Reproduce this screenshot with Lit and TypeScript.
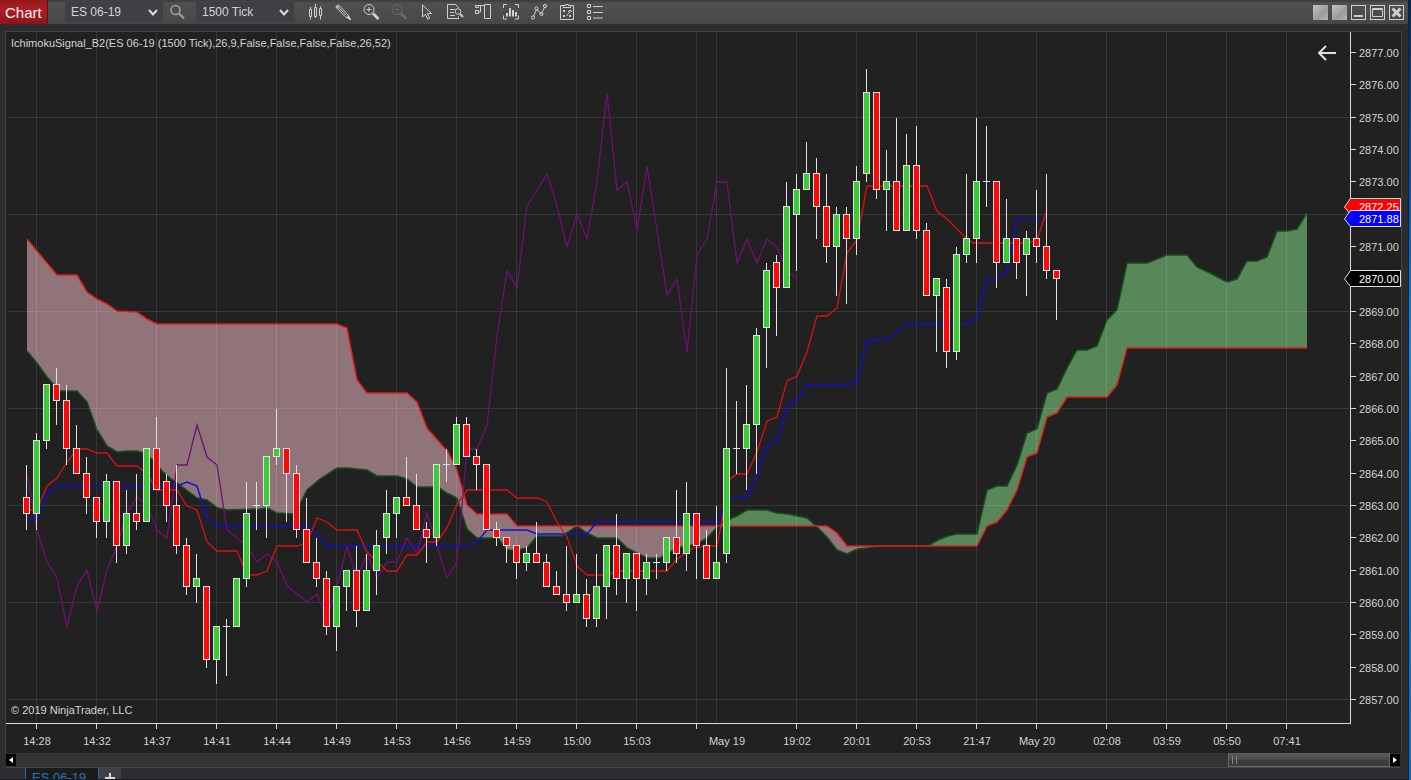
import { LitElement, html, svg, css } from "lit";
import { customElement } from "lit/decorators.js";

/* Plot coordinates: the pane spans 1344 x 691 units. */
const PANE = { x: 6, y: 32, w: 1344, h: 691 };
const TOP_PRICE = 2877;
const TICK_H = 8.0875;
const BAR_W = 10;
const FIRST_X = 26;
const SHIFT = 26;

const tickY = (k: number) => 52.5 + k * TICK_H;
const priceY = (p: number) => tickY((TOP_PRICE - p) * 4);
const pctX = (x: number) => `${((x - PANE.x) / PANE.w) * 100}%`;
const pctY = (y: number) => `${((y - PANE.y) / PANE.h) * 100}%`;

type Kind = "u" | "d" | "n";
type Bar = [number, number, number, number, Kind];

/* high, body top, body bottom, low: quarter points below 2877 */
const BARS: Bar[] = [
  [51, 55, 57, 59, "d"], [47, 48, 57, 59, "u"], [41, 41, 48, 49, "u"], [39, 41, 43, 46, "d"],
  [41, 43, 49, 51, "d"], [46, 49, 52, 52, "d"], [50, 52, 55, 57, "d"], [55, 55, 58, 60, "d"],
  [52, 53, 58, 60, "u"], [53, 53, 61, 63, "d"], [54, 57, 61, 62, "u"], [52, 57, 58, 59, "d"],
  [49, 49, 58, 58, "u"], [45, 49, 54, 54, "d"], [52, 53, 56, 58, "d"], [51, 56, 61, 62, "d"],
  [60, 61, 66, 67, "d"], [62, 65, 66, 68, "u"], [66, 66, 75, 76, "d"], [71, 71, 75, 78, "u"],
  [70, 71, 71, 77, "n"], [65, 65, 71, 71, "u"], [53, 57, 65, 66, "u"], [53, 56, 56, 59, "n"],
  [50, 50, 56, 60, "u"], [44, 49, 50, 51, "u"], [49, 49, 52, 58, "d"], [51, 52, 59, 60, "d"],
  [55, 59, 63, 63, "d"], [60, 63, 65, 66, "d"], [64, 65, 71, 72, "d"], [66, 66, 71, 74, "u"],
  [64, 64, 66, 69, "u"], [61, 64, 69, 71, "d"], [62, 64, 69, 69, "u"], [59, 61, 64, 67, "u"],
  [54, 57, 60, 62, "u"], [55, 55, 57, 60, "u"], [50, 55, 56, 56, "d"], [52, 56, 59, 59, "d"],
  [58, 59, 60, 63, "d"], [51, 51, 60, 61, "u"], [49, 51, 51, 53, "n"], [45, 46, 51, 51, "u"],
  [45, 46, 50, 50, "d"], [49, 50, 51, 54, "d"], [51, 51, 59, 59, "d"], [58, 59, 60, 61, "d"],
  [60, 60, 61, 63, "d"], [61, 61, 63, 65, "d"], [61, 62, 63, 64, "u"], [58, 62, 63, 63, "d"],
  [62, 63, 66, 66, "d"], [64, 66, 67, 67, "d"], [61, 67, 68, 69, "d"], [62, 67, 68, 68, "u"],
  [65, 67, 70, 71, "d"], [62, 66, 70, 71, "u"], [61, 61, 66, 70, "u"], [57, 61, 65, 67, "d"],
  [62, 62, 65, 68, "u"], [62, 62, 65, 69, "d"], [62, 63, 65, 67, "u"], [62, 63, 63, 65, "n"],
  [60, 60, 63, 64, "u"], [54, 60, 62, 63, "d"], [53, 57, 62, 64, "u"], [57, 57, 61, 65, "d"],
  [59, 61, 65, 65, "d"], [56, 63, 65, 65, "u"], [39, 49, 62, 63, "u"], [43, 49, 49, 52, "n"],
  [41, 46, 49, 54, "u"], [34, 35, 46, 52, "u"], [26, 27, 34, 39, "u"], [25, 26, 29, 35, "d"],
  [16, 19, 29, 29, "u"], [15, 17, 20, 27, "u"], [11, 15, 17, 17, "u"], [13, 15, 19, 23, "d"],
  [15, 19, 24, 26, "d"], [19, 20, 24, 30, "u"], [19, 20, 23, 31, "d"], [14, 16, 23, 25, "u"],
  [2, 5, 15, 16, "u"], [5, 5, 17, 18, "d"], [12, 16, 17, 22, "u"], [8, 16, 22, 22, "d"],
  [10, 14, 22, 22, "u"], [9, 14, 22, 23, "d"], [21, 22, 30, 30, "d"], [28, 28, 30, 37, "u"],
  [28, 29, 37, 39, "d"], [24, 25, 37, 38, "u"], [15, 23, 25, 26, "u"], [8, 16, 23, 26, "u"],
  [9, 16, 16, 19, "n"], [16, 16, 26, 29, "d"], [18, 23, 26, 26, "u"], [23, 23, 26, 28, "d"],
  [22, 23, 25, 30, "u"], [17, 23, 24, 26, "d"], [15, 24, 27, 28, "d"], [27, 27, 28, 33, "d"],
];

const SPAN_A =
  "27,351 37,363 47,377 57,388 60,391 77,391 87,402 97,430 107,446 117,452 127,451 137,451 144,453 153,460 163,472 170,478 180,485 197,498 207,500 218,508 227,510 260,509 267,508 277,513 295,514 307,490 320,479 337,468 347,468 357,469 367,470 377,476 397,476 407,479 417,487 438,487 447,493 457,498 467,529 477,538 498,538 507,550 517,550 527,548 537,536 562,536 577,526 587,533 597,538 617,538 627,548 647,558 660,558 677,548 697,544 707,538 718,526 730,519 737,516 747,510 767,510 777,513 788,514 807,518 816,526 827,537 837,550 847,554 857,549 867,548 878,546 928,546 938,540 948,536 957,534 977,534 987,490 997,486 1007,486 1017,465 1027,433 1037,429 1047,393 1057,389 1067,368 1077,350 1087,350 1097,346 1107,320 1117,310 1127,263 1147,263 1167,255 1187,255 1197,267 1210,273 1227,282 1237,279 1247,261 1257,261 1267,257 1277,231 1287,231 1297,229 1307,213";
const SPAN_B =
  "27,239 57,275 77,275 87,292 97,299 107,304 117,311 137,312 147,319 157,324 337,324 347,328 357,380 367,393 407,393 417,402 427,428 448,452 457,470 467,505 477,514 507,514 517,526 827,526 837,533 847,546 977,546 987,526 997,522 1007,510 1017,490 1027,457 1037,453 1047,417 1057,413 1067,397 1107,397 1117,385 1127,348 1307,348";
const TENKAN =
  "27,510 37,510 47,486 57,478 67,462 77,449 87,449 97,453 107,453 117,466 137,466 147,474 157,490 177,490 187,506 197,510 207,542 217,551 237,551 247,575 257,575 267,571 277,546 297,546 307,543 317,518 327,522 337,530 357,530 367,552 387,571 397,571 407,555 417,555 427,542 437,542 447,528 457,504 467,490 507,490 517,498 538,498 547,502 557,522 567,537 577,566 587,575 607,575 617,571 667,571 677,559 693,548 707,546 717,546 730,479 737,474 747,474 757,452 767,421 777,417 787,381 797,376 807,352 817,316 827,316 837,308 847,253 857,240 867,186 927,186 937,211 947,219 967,239 973,243 1027,243 1037,240 1047,210";
const KIJUN =
  "27,519 37,519 47,493 57,486 177,486 187,482 197,486 207,518 218,526 308,526 317,534 327,546 468,546 477,542 487,530 527,530 537,534 587,534 597,522 718,522 729,498 747,498 757,475 767,446 777,441 787,406 797,400 807,385 847,385 857,381 867,340 887,340 907,324 967,324 977,317 987,279 997,279 1007,271 1017,219 1047,219";

const closeOf = ([, t, b, , k]: Bar) => (k === "d" ? b : t);
const CHIKOU = BARS.slice(SHIFT)
  .map((bar, i) => `${FIRST_X + 1 + i * BAR_W},${Math.round(tickY(closeOf(bar)))}`)
  .join(" ");

const GRID_X = [36, 96, 156, 216, 276, 336, 396, 456, 516, 576, 636, 696, 716, 796, 856, 916, 976, 1036, 1106, 1166, 1226, 1286];
const GRID_P = [2875, 2872, 2869, 2866, 2863, 2860, 2857];
const TIMES: [number, string][] = [
  [36, "14:28"], [96, "14:32"], [156, "14:37"], [216, "14:41"], [276, "14:44"], [336, "14:49"],
  [396, "14:53"], [456, "14:56"], [516, "14:59"], [576, "15:00"], [636, "15:03"], [726, "May 19"],
  [796, "19:02"], [856, "20:01"], [916, "20:53"], [976, "21:47"], [1036, "May 20"], [1106, "02:08"],
  [1166, "03:59"], [1226, "05:50"], [1286, "07:41"],
];
const TICKS_X = GRID_X.filter((x) => x !== 716);
const PRICES = Array.from({ length: 21 }, (_, i) => TOP_PRICE - i).filter((p) => p !== 2872 && p !== 2870);
const FLAGS: [number, string, string][] = [
  [207, "2872.25", "red"],
  [219, "2871.88", "blue"],
  [279, "2870.00", "black"],
];

const TOOLS: [string, unknown][] = [
  ["Chart style", svg`<path d="M2.5 5.5h2v7h-2zM7.5 3.5h2v9h-2zM12.5 4.5h2v7h-2zM3.5 3v2.500M3.500 12.500v3M8.500 0v3.500M8.500 12.500v1.500M13.500 2.500v2M13.500 11.500v4"/>`],
  ["Drawing tools", svg`<path d="M.8 3 3.200.8 12.500 10 15.500 15.500 10 12.500zM2 1.900 11.200 11.200M1.500 4 4 1.500"/><path class="solid" d="M12 13.500 13.600 12l1.900 3.500z"/>`],
  ["Zoom in", svg`<circle cx="6" cy="5.500" r="5"/><path d="M3.500 5.500h5M6 3v5"/><path class="thick" d="M10 9.500 15.500 15"/>`],
  ["Zoom out", svg`<g class="dim"><circle cx="6" cy="5.500" r="5"/><path d="M3.500 5.500h5"/><path class="thick" d="M10 9.500 15.500 15"/></g>`],
  ["Pointer", svg`<path d="M3.500 1v12l3-2.800 2.200 5 2-1-2.200-4.700h4z"/>`],
  ["Data box", svg`<path d="M11.500 4V3.500L8.500.5h-8v14h11v-2M3 5.500h5M3 8.500h4M3 11.500h5"/><circle cx="11" cy="7.500" r="2.800"/><path class="mid" d="m13 10 3 3"/>`],
  ["Chart trader", svg`<path d="M9.500.5h6v14h-6zM0 1.500h9M.5 1.500v2h3v-2M.5 6.500h3v3h-3zM5.500 1.500v6.500h-2"/>`],
  ["Data series", svg`<path d="M4 .5H.5V4M12 .5h3.500V4M4 15H.5v-3.500M12 15h3.500v-3.500"/><path class="mid" d="M4 12.500V9M7 12.500V4M10 12.500V6M13 12.500V8"/>`],
  ["Indicators", svg`<path d="m2.500 12.500 3-7 5 4 3.500-7"/><circle cx="2" cy="13.500" r="1.600"/><circle cx="5.500" cy="4.500" r="1.600"/><circle cx="10.500" cy="10" r="1.600"/><circle cx="14" cy="2" r="1.600"/>`],
  ["Strategies", svg`<path d="M4.500 1.500h-3v14h13v-14h-3M4.500 3.500v-2h2V.5h3v1h2v2zM4 6l2 2M6 6 4 8M4 11l2 2M6 11l-2 2M8 12c0-3 3-2 3-5M9 8l2-2 2 2M10 11l2 2M12 11l-2 2"/>`],
  ["Properties", svg`<path d="M.5.5h3v3h-3zM.5 6.500h3v3h-3zM.5 12.500h3v3h-3zM6 2.500h10M6 8.500h10M6 14h10"/>`],
];

@customElement("app-root")
export class AppRoot extends LitElement {
  static styles = css`
    :host {
      display: flex;
      height: 100vh;
      overflow: hidden;
      background: #2d2d30;
      color: #d4d4d4;
      font: 11px "Liberation Sans", Arial, sans-serif;
    }
    *, *::before, *::after { box-sizing: border-box; }
    button, select { font: inherit; color: inherit; margin: 0; padding: 0; border: 0; background: none; }
    .window { flex: 1; min-width: 0; display: flex; flex-direction: column; border-right: 1px solid #17202b; }
    .desktop { width: 2px; background: linear-gradient(#04285c, #0a5fb4 30%, #0d8fe4 45%, #0a78d0 65%, #0a6cc0); }
    .bar {
      display: flex;
      align-items: center;
      height: 24px;
      background: linear-gradient(#3c3c3c, #505050 15%, #474747);
      font-size: 12px;
    }
    .title {
      width: 48px;
      height: 24px;
      margin-right: 17px;
      padding-left: 5px;
      font-size: 15px;
      line-height: 25px;
      color: #f4f4f4;
      background: linear-gradient(#931a1d, #b01d22 40%, #8c1518);
      border-right: 1px solid #5a1416;
    }
    .pick { display: grid; width: 98px; height: 20px; background: #3f3f46; }
    .pick > * { grid-area: 1 / 1; }
    .pick select { appearance: none; width: 100%; padding-left: 6px; outline: 0; }
    .pick svg { justify-self: end; align-self: center; margin-right: 5px; width: 10px; height: 7px; pointer-events: none; }
    .tools { display: flex; padding-left: 7px; }
    .tool { display: grid; place-items: center; width: 28px; height: 24px; }
    .search { margin-right: 5px; }
    .tool svg { width: 16px; height: 16px; overflow: visible; }
    .tool svg, .arrow svg, .win svg { fill: none; stroke: #cfcfcf; stroke-width: 1; }
    .thick { stroke-width: 3; }
    .mid { stroke-width: 2; }
    .dim { stroke: #6a6a6a; }
    .lens { stroke: #a0a0a0; }
    .solid { fill: #cfcfcf; }
    .swatches { margin-left: auto; display: flex; gap: 4px; padding-right: 4px; }
    .swatch { width: 15px; height: 15px; background: linear-gradient(135deg, #c4c4c4, #9c9c9c 60%, #b4b4b4); }
    .win { width: 15px; height: 15px; border: 1px solid #cfcfcf; display: grid; place-items: center; }
    .win svg { width: 13px; height: 13px; }
    .main { flex: 1; min-height: 0; display: flex; flex-direction: column; margin: 7px 6px 0 5px; border: 1px solid #424246; border-width: 1px 1px 0; background: #212121; }
    .chart { flex: 1; min-height: 0; display: grid; grid-template: minmax(0, 1fr) 29px / minmax(0, 1fr) 50px; }
    .plot { display: grid; border: 1px solid #d8d8d8; border-width: 0 1px 1px 0; }
    .plot > * { grid-area: 1 / 1; }
    .plot > svg { width: 100%; height: 100%; min-height: 0; }
    .name { padding: 5px; line-height: 13px; z-index: 1; }
    .copy { align-self: end; padding: 6px 5px; line-height: 13px; z-index: 1; }
    .arrow { justify-self: end; align-self: start; z-index: 1; margin: 12px 13px 0 0; width: 20px; height: 18px; }
    .arrow svg { width: 20px; height: 18px; stroke: #e0e0e0; stroke-width: 2; }
    .axis { overflow: visible; fill: #d4d4d4; font-size: 11px; }
    .price { width: 100%; height: calc(100% - 1px); }
    .time { width: calc(100% - 1px); height: 100%; }
    .axis line { stroke: #d8d8d8; shape-rendering: crispEdges; }
    .mark { overflow: visible; }
    .mark text { fill: #fff; }
    .mark path { stroke: #e0e0e0; }
    .red { fill: #fe0000; }
    .blue { fill: #0000fe; }
    .black { fill: #000; }
    .grid { stroke: #fff; stroke-opacity: 0.1; shape-rendering: crispEdges; }
    .line { fill: none; stroke-width: 1.3; }
    .a { stroke: #14501a; stroke-width: 1.5; }
    .b { stroke: #e01c1c; stroke-width: 1.5; }
    .t { stroke: #dc1010; }
    .k { stroke: #1010d0; stroke-width: 1.5; }
    .c { stroke: #720f72; }
    .bars { stroke: #e0e0e0; shape-rendering: crispEdges; }
    .u { fill: #3acb37; }
    .d { fill: #fc0808; }
    .scroll { display: flex; align-items: stretch; height: 15px; margin: 0 8px 0 6px; background: #333334; border-bottom: 1px solid #464648; }
    .step { width: 10px; background: #000; display: grid; place-items: center; margin: 1px 0; }
    .step svg { width: 4px; height: 6px; fill: #fff; }
    .thumb { margin-left: auto; width: 162px; padding: 3px; border: 1px solid #6a6a6a; border-top: 0; background: linear-gradient(#5c5c5c, #4a4a4a 50%, #3c3c3c 55%, #3a3a3a); }
    .grip { width: 5px; height: 8px; border: 1px solid #808080; border-width: 0 1px; }
    .tabs { display: flex; height: 12px; padding-left: 25px; overflow: hidden; border-bottom: 1px solid #1d1923; }
    .tab { width: 74px; height: 24px; background: #1b1b1c; border: 1px solid #1c6fae; border-top: 0; color: #2277b8; font-size: 13px; line-height: 20px; text-align: left; padding: 0 0 4px 6px; }
    .add { width: 22px; height: 24px; background: #3f3f46; display: grid; place-items: start center; padding-top: 5px; }
    .add svg { width: 10px; height: 10px; stroke: #d8d8d8; stroke-width: 2; }
  `;

  private pick(label: string, value: string) {
    return html`<div class="pick">
      <select aria-label=${label}><option>${value}</option></select>
      <svg viewBox="0 0 10 7" fill="none" stroke="#dcdcdc" stroke-width="2"><path d="m1 1 4 4.500L9 1" /></svg>
    </div>`;
  }

  private candle([hi, top, bot, lo, kind]: Bar, i: number) {
    const x = FIRST_X + i * BAR_W + 0.5;
    const y = (k: number) => Math.floor(tickY(k)) + 0.5;
    return svg`
      <path d="M${x} ${y(hi)}V${y(lo)}" />
      ${kind === "n"
        ? svg`<path d="M${x - 3.5} ${y(top)}h7" />`
        : svg`<rect class=${kind} x=${x - 3} y=${y(top)} width="6" height=${y(bot) - y(top)} />`}`;
  }

  private plot() {
    const cloud = `${SPAN_A} ${SPAN_B.split(" ").reverse().join(" ")}`;
    return html`<svg viewBox="6 32 1344 691" preserveAspectRatio="none" role="img" aria-label="Price chart with Ichimoku cloud">
      <defs>
        <linearGradient id="cloud" gradientUnits="userSpaceOnUse" x1="0" y1="0" x2="1400" y2="0">
          ${[[0, 718, "#91747a"], [718, 816, "#58875a"], [816, 900, "#91747a"], [900, 1400, "#58875a"]].map(
            ([from, to, color]) => svg`
              <stop offset=${Number(from) / 1400} stop-color=${color} />
              <stop offset=${Number(to) / 1400} stop-color=${color} />`
          )}
        </linearGradient>
      </defs>
      <polygon fill="url(#cloud)" points=${cloud} />
      <polyline class="line a" points=${SPAN_A} />
      <g class="grid">
        ${GRID_X.map((x) => svg`<path d="M${x + 0.5} 32V723" />`)}
        ${GRID_P.map((p) => svg`<path d="M8 ${Math.floor(priceY(p)) + 0.5}H1350" />`)}
      </g>
      <polyline class="line b" points=${SPAN_B} />
      <polyline class="line c" points=${CHIKOU} />
      <polyline class="line k" points=${KIJUN} />
      <polyline class="line t" points=${TENKAN} />
      <g class="bars">${BARS.map((b, i) => this.candle(b, i))}</g>
    </svg>`;
  }

  render() {
    return html`
      <div class="window">
        <header class="bar">
          <div class="title">Chart</div>
          ${this.pick("Instrument", "ES 06-19")}
          <button class="tool search" aria-label="Find instrument">
            <svg viewBox="0 0 16 16"><g class="lens"><circle cx="6.500" cy="6" r="4.500" stroke-width="1.500" /><path class="mid" d="m10 9.500 5 5" /></g></svg>
          </button>
          ${this.pick("Interval", "1500 Tick")}
          <nav class="tools" aria-label="Chart tools">
            ${TOOLS.map(([name, icon]) => html`<button class="tool" aria-label=${name}><svg viewBox="0 0 16 16">${icon}</svg></button>`)}
          </nav>
          <div class="swatches">
            <button class="swatch" aria-label="Instrument link"></button>
            <button class="swatch" aria-label="Interval link"></button>
            <button class="win" aria-label="Minimize"><svg viewBox="0 0 13 13"><path class="mid" d="M2 10h9" /></svg></button>
            <button class="win" aria-label="Maximize"><svg viewBox="0 0 13 13"><path d="M1.500 2.500h10v8h-10zM1.500 3.500h10" /></svg></button>
            <button class="win" aria-label="Close"><svg viewBox="0 0 13 13"><path class="thick" d="m2.500 2.500 8 8M10.500 2.500l-8 8" /></svg></button>
          </div>
        </header>
        <main class="main">
          <div class="chart">
            <div class="plot">
              ${this.plot()}
              <div class="name">IchimokuSignal_B2(ES 06-19 (1500 Tick),26,9,False,False,False,False,26,52)</div>
              <div class="copy">© 2019 NinjaTrader, LLC</div>
              <button class="arrow" aria-label="Scroll to latest bar"><svg viewBox="0 0 20 18"><path d="M2 9h17M9 2 2 9l7 7" /></svg></button>
            </div>
            <svg class="axis price">
              ${PRICES.map((p) => svg`
                <svg class="mark" y=${pctY(Math.floor(priceY(p)))}>
                  <line x1="0" x2="5" y1="0.5" y2="0.5" />
                </svg>
                <text x="8" dy="4" y=${pctY(Math.floor(priceY(p)) + 1)}>${p.toFixed(2)}</text>`)}
              ${FLAGS.map(([y, label, color]) => svg`
                <svg class="mark" y=${pctY(y)}>
                  <path class=${color} d="M-6.500 0-.5-8.500h50v16h-50z" />
                  <text x="8" y="4">${label}</text>
                </svg>`)}
            </svg>
            <svg class="axis time">
              ${TICKS_X.map((x) => svg`<svg class="mark" x=${pctX(x)}><line x1="0.5" x2="0.5" y1="0" y2="5" /></svg>`)}
              ${TIMES.map(([x, label]) => svg`<text text-anchor="middle" y="21" x=${pctX(x + 1)}>${label}</text>`)}
            </svg>
          </div>
        </main>
        <div class="scroll">
          <button class="step" aria-label="Scroll left"><svg viewBox="0 0 4 6"><path d="M4 0v6L0 3z" /></svg></button>
          <div class="thumb"><div class="grip"></div></div>
          <button class="step" aria-label="Scroll right"><svg viewBox="0 0 4 6"><path d="M0 0v6l4-3z" /></svg></button>
        </div>
        <footer class="tabs">
          <button class="tab">ES 06-19</button>
          <button class="add" aria-label="Add tab"><svg viewBox="0 0 10 10"><path d="M5 0v10M0 5h10" /></svg></button>
        </footer>
      </div>
      <div class="desktop"></div>
    `;
  }
}
